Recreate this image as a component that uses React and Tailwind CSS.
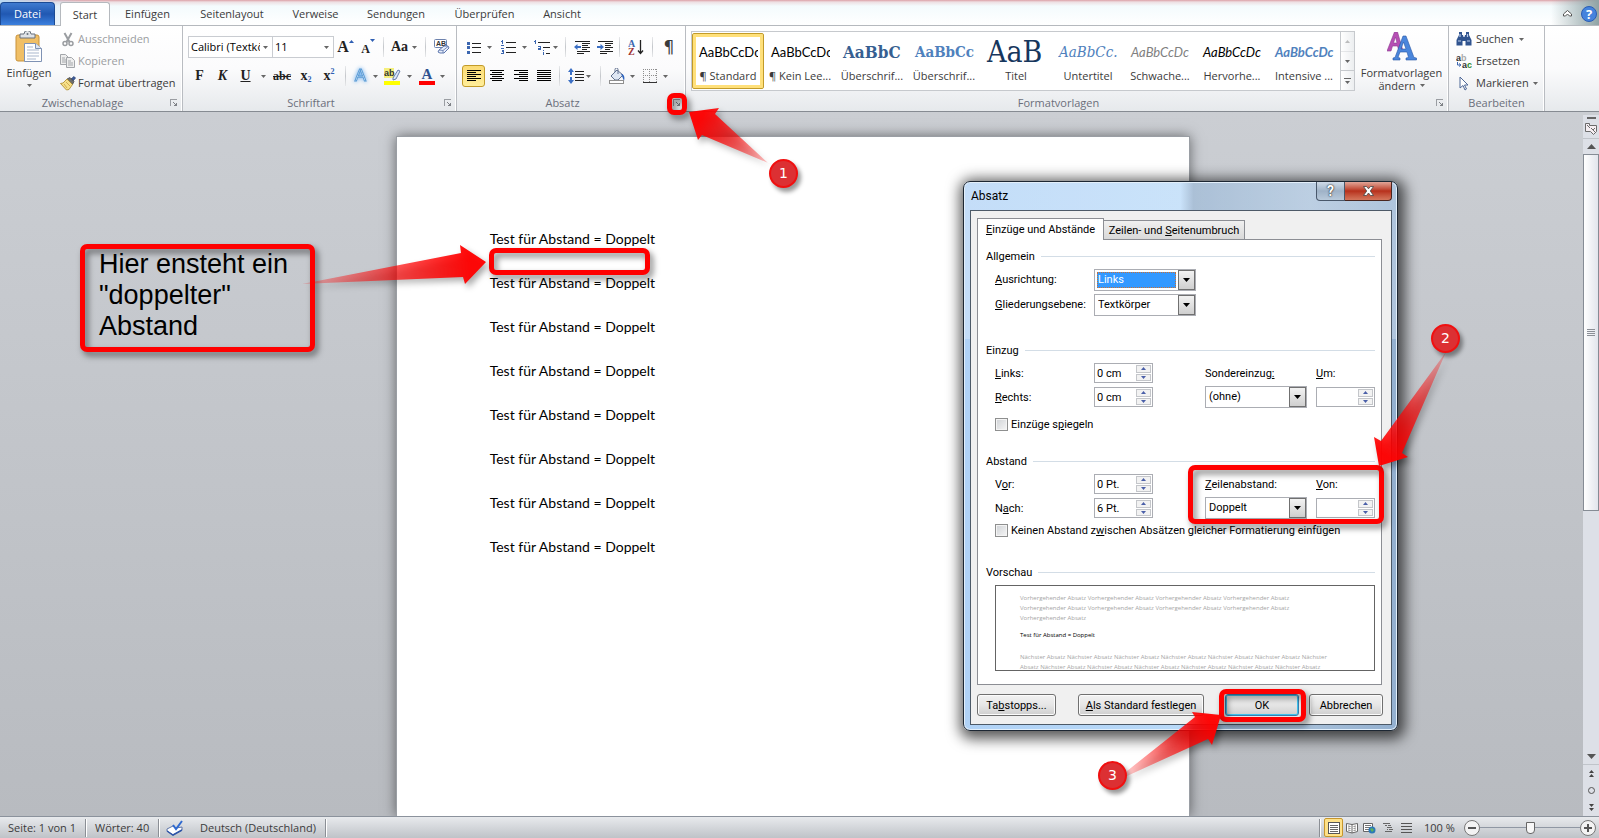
import React from 'react';

// --- Small helpers ---
const Caret = ({ className = "" }) => (
  <svg className={`w-[5px] h-[3px] shrink-0 ${className}`} viewBox="0 0 5 3">
    <path d="M0 0h5L2.500 3z" fill="#666" />
  </svg>
);

const Sep = () => (
  <span className="w-2 h-5 flex justify-center shrink-0">
    <span className="w-px h-full bg-gradient-to-b from-[#e8e9eb] via-[#c4c7cb] to-[#e8e9eb]" />
  </span>
);

const Tool = ({ label, className = "", children }) => (
  <button type="button" aria-label={label} className={`h-[22px] flex items-center justify-center shrink-0 ${className}`}>
    {children}
  </button>
);

const Lines = ({ rows, color = "#000" }) => (
  <svg className="w-[14px] h-[12px]" viewBox="0 0 14 12" shapeRendering="crispEdges">
    {rows.map(([x, w], i) => (
      <rect key={i} x={x} y={i * 2} width={w} height="1" fill={color} />
    ))}
  </svg>
);

// --- Icons ---
const PasteIcon = () => (
  <svg className="w-[28px] h-[32px]" viewBox="0 0 28 32">
    <rect x="1" y="4" width="23" height="26" rx="2" fill="#f0bf66" stroke="#c8923a" />
    <path d="M5 7V3h4a3.500 3.500 0 0 1 7 0h4v4z" fill="#dfe3e8" stroke="#68717c" />
    <circle cx="12.500" cy="3" r="1" fill="#68717c" />
    <path d="M9.500 12.500h11l6 5v13h-17z" fill="#fff" stroke="#7f92b4" />
    <path d="M20.500 12.500v5h6" fill="#dce5f3" stroke="#7f92b4" />
    <path d="M12 16h6M12 19h12M12 22h12M12 25h12M12 28h9" stroke="#a9b7cd" />
  </svg>
);

const ScissorsIcon = () => (
  <svg className="w-[14px] h-[15px]" viewBox="0 0 14 15" fill="none" stroke="#9a9da1">
    <path d="M3.500 1l5 9M10.500 1l-5 9" strokeWidth="2" />
    <circle cx="4" cy="11.500" r="2" strokeWidth="1.500" />
    <circle cx="10" cy="11.500" r="2" strokeWidth="1.500" />
  </svg>
);

const CopyIcon = () => (
  <svg className="w-[16px] h-[14px]" viewBox="0 0 16 14" fill="#eee" stroke="#a3a6aa">
    <path d="M.5.5h5l3 3v7h-8z" />
    <path d="M2 4h3M2 6h4M2 8h4" />
    <path d="M6.500 3.500h5l3 3v7h-8z" />
    <path d="M8 7h3M8 9h5M8 11h5" />
  </svg>
);

const BrushIcon = () => (
  <svg className="w-[16px] h-[15px]" viewBox="0 0 16 15">
    <path d="M11 3l3-2.500 1.500 1.500L13 5z" fill="#3d5c9c" stroke="#24396b" strokeWidth=".7" />
    <path d="M7 3l3-1.500 4 4-1.500 3z" fill="#6d6d6d" stroke="#3c3c3c" strokeWidth=".7" />
    <path d="M7 3l5.500 5.500L9 13.500 6.500 14 0.500 7.500 3 7z" fill="#f6e08a" stroke="#ab8726" strokeWidth=".8" />
    <path d="M4 8l3 4M6 6l4 4" stroke="#c9a240" strokeWidth=".8" />
  </svg>
);

const EraserIcon = () => (
  <svg className="w-[17px] h-[16px]" viewBox="0 0 17 16">
    <rect x="1.500" y=".5" width="12" height="8" rx="1" fill="#fff" stroke="#6d82ad" />
    <text x="3" y="7" fontSize="7" fontWeight="bold" fontFamily="Liberation Sans" fill="#333">AB</text>
    <path d="M6 11l5-4h4l1 2-5 5H7l-2-1z" fill="#e8eefa" stroke="#5d76ad" />
    <path d="M6 11l4 .5 5-4M10 11.500V14" fill="none" stroke="#5d76ad" strokeWidth=".8" />
  </svg>
);

const BulletsIcon = () => (
  <svg className="w-[14px] h-[13px]" viewBox="0 0 14 13" shapeRendering="crispEdges">
    <path d="M0 1h3v3H0zM0 5h3v3H0zM0 10h3v3H0z" fill="#3b66b0" />
    <path d="M5 2h9v1H5zM5 6h9v1H5zM5 11h9v1H5z" fill="#222" />
  </svg>
);

const NumberingIcon = () => (
  <svg className="w-[15px] h-[14px]" viewBox="0 0 15 14" shapeRendering="crispEdges">
    <path d="M1 0h1v4H1zM0 1h1v1H0zM0 5h3v1H2v1H1v1h2v1H0V8h1V7h1V6H0zM0 10h3v4H0v-1h2v-1H1v-1h1z" fill="#3b66b0" />
    <path d="M5 2h10v1H5zM5 7h10v1H5zM5 12h10v1H5z" fill="#222" />
  </svg>
);

const MultiLevelIcon = () => (
  <svg className="w-[18px] h-[15px]" viewBox="0 0 18 15" shapeRendering="crispEdges">
    <path d="M1 0h1v4H1zM0 1h1v1H0zM4 6h3v4H4V8h2V7H4zM9 10h1v1H9zM9 12h1v3H9z" fill="#3b66b0" />
    <path d="M4 2h12v1H4zM9 7h7v1H9zM12 13h4v1h-4z" fill="#222" />
  </svg>
);

const IndentIcon = ({ right }) => (
  <svg className="w-[16px] h-[13px]" viewBox="0 0 16 13">
    <path d="M1 0h15M8 2h8M8 4h6M8 6h8M8 8h5M3 10h13M3 12h7" stroke="#222" transform="translate(0 .5)" shapeRendering="crispEdges" />
    <path d={right ? "M7 6L3.500 3v2H0v2h3.500v2z" : "M0 6l3.500-3v2H7v2H3.500v2z"} fill="#3b6fc4" />
  </svg>
);

const SortIcon = () => (
  <svg className="w-[16px] h-[17px]" viewBox="0 0 16 17">
    <text x="0" y="8" fontSize="10" fontWeight="bold" fontFamily="Liberation Serif" fill="#3b66b0">A</text>
    <text x="0" y="16" fontSize="10" fontWeight="bold" fontFamily="Liberation Serif" fill="#a03434">Z</text>
    <path d="M12.500 1v13M10 11.500l2.500 3 2.500-3" fill="none" stroke="#222" strokeWidth="1.300" />
  </svg>
);

const SpacingIcon = () => (
  <svg className="w-[16px] h-[16px]" viewBox="0 0 16 16">
    <path d="M3 0l3 4H4v3H2V4H0zM3 16l3-4H4V9H2v3H0z" fill="#3b6fc4" />
    <path d="M6.500 3.500H16M6.500 6.500H16M6.500 9.500H16M6.500 12.500H16" stroke="#222" shapeRendering="crispEdges" />
  </svg>
);

const BucketIcon = () => (
  <svg className="w-[18px] h-[16px]" viewBox="0 0 18 16">
    <path d="M3 8l6-6 6 5-5 5H7z" fill="#dfe7f4" stroke="#60708f" />
    <path d="M7 4V1.500a1.500 1.500 0 0 1 3 0V6" fill="none" stroke="#60708f" />
    <path d="M13 6c3 0 4 3 3 7l-2-5z" fill="#2a62bd" />
    <rect x="1.500" y="12.500" width="14" height="3" fill="#fff" stroke="#8f8f8f" />
  </svg>
);

const BordersIcon = () => (
  <svg className="w-[14px] h-[14px]" viewBox="0 0 14 14" shapeRendering="crispEdges">
    <path d="M0 .5h13M.5 0v13M13.500 0v13M6.500 0v13M0 6.500h13" stroke="#8d8d8d" strokeDasharray="1 1" />
    <path d="M0 13.500h14" stroke="#333" />
  </svg>
);

const LauncherIcon = () => (
  <svg className="w-[8px] h-[8px]" viewBox="0 0 8 8" shapeRendering="crispEdges">
    <path d="M0 .5h7M.5 0v7" stroke="#9a9da2" />
    <path d="M7 3v4H3zM3 3h1v1h1v1H4z" fill="#7f8287" />
  </svg>
);

const StylesIcon = () => (
  <svg className="w-[30px] h-[29px]" viewBox="0 0 30 29">
    <path d="M0 19L7.500 0h3L16 19h-4l-1.500-5h-5L4 19zM6.500 11h3.500L8.500 5z" fill="#b64fb4" stroke="#8c3b90" strokeWidth=".6" />
    <path fillRule="evenodd" d="M6 28v-2l2-.5L16 4h3l8 21.500 2.500.5v2H19v-2l2.500-.5L20 20h-7l-2 5.500 2 .5v2zM14 17h5l-2.500-7z" fill="#4a86dc" stroke="#2a58a6" strokeWidth=".6" />
  </svg>
);

const BinocularsIcon = () => (
  <svg className="w-[16px] h-[14px]" viewBox="0 0 16 14">
    <path d="M3 0h3v3h1l.5 2h1L9 3h1V0h3v3l2.500 5v5.500h-6V9h-3v4.500h-6V8L3 3z" fill="#31548f" />
    <path d="M2 9h3M11 9h3M4 2v3M11.500 2v3" stroke="#b9cbea" strokeWidth="1.200" />
  </svg>
);

const ReplaceIcon = () => (
  <svg className="w-[16px] h-[15px]" viewBox="0 0 16 15">
    <text x="0" y="7" fontSize="9" fontWeight="bold" fontFamily="Liberation Sans" fill="#333">a<tspan fill="#aaa">b</tspan></text>
    <text x="6" y="14" fontSize="9" fontWeight="bold" fontFamily="Liberation Sans" fill="#333">a<tspan fill="#2c8a2c">c</tspan></text>
    <path d="M1.500 8v3H4M3 9.500L5 11l-2 1.500" fill="none" stroke="#3b66b0" />
  </svg>
);

const PointerIcon = () => (
  <svg className="w-[10px] h-[15px]" viewBox="0 0 10 15">
    <path d="M1 1l8 8H5.500l2 4-1.500 1-2-4.500L1 12z" fill="#fff" stroke="#4e6897" />
  </svg>
);

const ProofIcon = () => (
  <svg className="w-[18px] h-[16px]" viewBox="0 0 18 16">
    <path d="M1 9l6-3 3 2 6-1v3l-9 5-6-4z" fill="#fff" stroke="#5b73a8" />
    <path d="M1 11l6 4 9-5" fill="none" stroke="#2f55a8" strokeWidth="1.500" />
    <path d="M7 5l3 4 6-8" fill="none" stroke="#2f6ad0" strokeWidth="2" />
  </svg>
);

// --- Ribbon ---
const TABS = [
  { name: "Einfügen", width: "w-[75px]" },
  { name: "Seitenlayout", width: "w-[94px]" },
  { name: "Verweise", width: "w-[73px]" },
  { name: "Sendungen", width: "w-[88px]" },
  { name: "Überprüfen", width: "w-[89px]" },
  { name: "Ansicht", width: "w-[66px]" },
];

const RibbonTabs = () => (
  <nav className="h-[26px] flex items-end border-b border-[#b5b9be] bg-[linear-gradient(to_right,#b9d9f3,transparent_5%,transparent_97%,#8fa3a5),linear-gradient(#dca0a6,#eedfe2_2px,#f4fbfd_6px,#fff)]">
    <button type="button" className="w-[55px] h-[23px] rounded-t-sm border border-[#1b4a94] border-b-0 bg-gradient-to-b from-[#3f7bd0] via-[#2058b2] to-[#3c80de] text-white">
      Datei
    </button>
    <button type="button" className="w-[50px] h-[24px] ml-[5px] -mb-px rounded-t-[3px] border border-b-0 border-[#b5b9be] bg-white">
      Start
    </button>
    {TABS.map((tab) => (
      <button key={tab.name} type="button" className={`h-[23px] ${tab.width}`}>{tab.name}</button>
    ))}
    <div className="ml-auto h-[23px] flex items-center gap-[9px] pr-[2px]">
      <button type="button" aria-label="Menüband minimieren">
        <svg className="w-[9px] h-[7px]" viewBox="0 0 9 7">
          <path d="M.5 4l4-3.500 4 3.500v2H6.500l-2-2-2 2H.5z" fill="#fff" stroke="#555" />
        </svg>
      </button>
      <button type="button" aria-label="Hilfe" className="size-4 rounded-full border border-[#2a5db4] bg-[#4583dd] text-white text-[13px] leading-[14px] font-bold">?</button>
    </div>
  </nav>
);

const RibbonGroup = ({ title, launcher = true, width, children }) => (
  <section aria-label={title} className={`flex flex-col shrink-0 border-r border-[#b9bcc1] shadow-[inset_-1px_0_0_#fff] ${width}`}>
    <div className="flex-1">{children}</div>
    <div className="h-4 flex items-center text-[#6b6f7b]">
      <span className="flex-1 text-center">{title}</span>
      {launcher && (
        <button type="button" aria-label={`${title} öffnen`} className="w-[17px] flex justify-center">
          <LauncherIcon />
        </button>
      )}
    </div>
  </section>
);

const ClipboardGroup = () => (
  <RibbonGroup title="Zwischenablage" width="w-[183px]">
    <div className="flex">
      <button type="button" className="w-[58px] pt-[5px] flex flex-col items-center">
        <PasteIcon />
        <span className="leading-[20px]">Einfügen</span>
        <Caret className="mt-px" />
      </button>
      <div className="pt-[2px] flex flex-col">
        <button type="button" className="h-[22px] flex items-center text-[#9b9da1]">
          <span className="w-5 flex justify-center">
            <ScissorsIcon />
          </span>Ausschneiden
        </button>
        <button type="button" className="h-[22px] flex items-center text-[#9b9da1]">
          <span className="w-5 flex justify-center">
            <CopyIcon />
          </span>Kopieren
        </button>
        <button type="button" className="h-[22px] flex items-center">
          <span className="w-5 flex justify-center">
            <BrushIcon />
          </span>Format übertragen
        </button>
      </div>
    </div>
  </RibbonGroup>
);

const FontGroup = () => (
  <RibbonGroup title="Schriftart" width="w-[274px]">
    <div className="pl-[5px] pt-[10px] font-['Liberation_Serif',serif] text-[14px] font-bold text-[#222]">
      <div className="h-[22px] flex items-center">
        <div className="w-[85px] h-[22px] flex items-center border border-[#c9ccd1] bg-white pl-[2px] pr-1">
          <input aria-label="Schriftart" defaultValue="Calibri (Textkörper)" className="min-w-0 flex-1 mr-[3px] font-['Open_Sans',sans-serif] text-[11px] font-normal text-black outline-none" />
          <Caret />
        </div>
        <div className="w-[62px] h-[22px] flex items-center border border-[#c9ccd1] bg-white pl-[2px] pr-1 -ml-px">
          <input aria-label="Schriftgrad" defaultValue="11" className="min-w-0 flex-1 font-['Open_Sans',sans-serif] text-[11px] font-normal text-black outline-none" />
          <Caret />
        </div>
        <Tool label="Schrift vergrößern" className="w-[23px] text-[16px]">A<svg className="w-[5px] h-[3px] mb-3" viewBox="0 0 5 3"><path d="M0 3h5L2.500 0z" fill="#2f5fb3" /></svg></Tool>
        <Tool label="Schrift verkleinern" className="w-[22px] text-xs pt-[3px]">A<svg className="w-[5px] h-[3px] mb-4" viewBox="0 0 5 3"><path d="M0 0h5L2.500 3z" fill="#2f5fb3" /></svg></Tool>
        <Sep />
        <Tool label="Groß-/Kleinschreibung" className="w-[34px] gap-1">Aa<Caret /></Tool>
        <Sep />
        <Tool label="Formatierung löschen" className="w-6"><EraserIcon /></Tool>
      </div>
      <div className="h-[22px] mt-[7px] flex items-center">
        <Tool label="Fett" className="w-[23px]">F</Tool>
        <Tool label="Kursiv" className="w-[23px] italic">K</Tool>
        <Tool label="Unterstrichen" className="w-[23px] underline">U</Tool>
        <Tool label="Unterstreichungsart" className="w-3"><Caret /></Tool>
        <Tool label="Durchgestrichen" className="w-[26px] text-xs line-through">abc</Tool>
        <Tool label="Tiefgestellt" className="w-[22px]">x<span className="text-[8px] text-[#2f5fb3] mt-2">2</span></Tool>
        <Tool label="Hochgestellt" className="w-6">x<span className="text-[8px] text-[#2f5fb3] mb-2">2</span></Tool>
        <Sep />
        <Tool label="Texteffekte" className="w-8 gap-1">
          <span className="w-4 font-['Liberation_Sans',sans-serif] text-[17px] leading-5 font-normal text-white [-webkit-text-stroke:1px_#5a9bd5] drop-shadow-[0_0_2px_#5aa5ee]">A</span>
          <Caret />
        </Tool>
        <Tool label="Texthervorhebungsfarbe" className="w-[34px] gap-[6px]">
          <svg className="w-[17px] h-[17px]" viewBox="0 0 17 17">
            <rect width="10" height="10" fill="#f5ef7c" />
            <text x="0" y="8" fontSize="9" fontWeight="bold" fontFamily="Liberation Sans" fill="#333">ab</text>
            <path d="M9 10l5-8 2 1-4 8-3 1z" fill="#dbe7fa" stroke="#48639b" strokeWidth=".8" />
            <rect y="13" width="16" height="4" fill="#ff0" />
          </svg>
          <Caret />
        </Tool>
        <Tool label="Schriftfarbe" className="w-[34px] gap-[5px]">
          <span className="w-4 h-[17px] flex items-end justify-center border-b-4 border-[#f00] text-[#2f5290] text-[15px] leading-[13px]">A</span>
          <Caret />
        </Tool>
      </div>
    </div>
  </RibbonGroup>
);

const ParagraphGroup = () => (
  <RibbonGroup title="Absatz" width="w-[229px]">
    <div className="pl-[5px] pt-[10px]">
      <div className="h-[22px] flex items-center">
        <Tool label="Aufzählungszeichen" className="w-[34px] gap-[6px]"><BulletsIcon /><Caret /></Tool>
        <Tool label="Nummerierung" className="w-[35px] gap-[6px]"><NumberingIcon /><Caret /></Tool>
        <Tool label="Liste mit mehreren Ebenen" className="w-[30px] gap-px"><MultiLevelIcon /><Caret /></Tool>
        <Sep />
        <Tool label="Einzug verkleinern" className="w-[25px]"><IndentIcon /></Tool>
        <Tool label="Einzug vergrößern" className="w-[21px]"><IndentIcon right /></Tool>
        <Sep />
        <Tool label="Sortieren" className="w-[25px]"><SortIcon /></Tool>
        <Sep />
        <Tool label="Alle anzeigen" className="w-[26px] text-[17px] font-['DejaVu_Sans',sans-serif]">¶</Tool>
      </div>
      <div className="h-[22px] mt-[7px] flex items-center">
        <Tool label="Linksbündig" className="w-[23px] rounded-[3px] border border-[#c29b29] bg-gradient-to-b from-[#fbdb74] to-[#ffee9a]">
          <Lines rows={[[0, 14], [0, 9], [0, 14], [0, 9], [0, 14], [0, 9]]} />
        </Tool>
        <Tool label="Zentriert" className="w-6"><Lines rows={[[0, 14], [2, 10], [0, 14], [2, 10], [0, 14], [2, 10]]} /></Tool>
        <Tool label="Rechtsbündig" className="w-6"><Lines rows={[[0, 14], [5, 9], [0, 14], [5, 9], [0, 14], [5, 9]]} /></Tool>
        <Tool label="Blocksatz" className="w-[22px]"><Lines rows={[[0, 14], [0, 14], [0, 14], [0, 14], [0, 14], [0, 14]]} /></Tool>
        <Sep />
        <Tool label="Zeilenabstand" className="w-[33px] gap-[2px]"><SpacingIcon /><Caret /></Tool>
        <Sep />
        <Tool label="Schattierung" className="w-[34px] gap-1"><BucketIcon /><Caret /></Tool>
        <Tool label="Rahmen" className="w-[34px] gap-[6px]"><BordersIcon /><Caret /></Tool>
      </div>
    </div>
  </RibbonGroup>
);

const STYLES = [
  { name: "¶ Standard", sample: "AaBbCcDc", look: "font-['Lato',sans-serif] text-[13px] text-black", active: true },
  { name: "¶ Kein Lee...", sample: "AaBbCcDc", look: "font-['Lato',sans-serif] text-[13px] text-black" },
  { name: "Überschrif...", sample: "AaBbC", look: "font-['DejaVu_Serif_Condensed','DejaVu_Serif',serif] font-bold text-[17px] text-[#365f91]" },
  { name: "Überschrif...", sample: "AaBbCc", look: "font-['DejaVu_Serif_Condensed','DejaVu_Serif',serif] font-bold text-[15px] text-[#4f81bd]" },
  { name: "Titel", sample: "AaB", look: "font-['DejaVu_Serif_Condensed','DejaVu_Serif',serif] text-[30px] text-[#17365d]" },
  { name: "Untertitel", sample: "AaBbCc.", look: "font-['DejaVu_Serif_Condensed','DejaVu_Serif',serif] italic text-[15px] text-[#4f81bd]" },
  { name: "Schwache...", sample: "AaBbCcDc", look: "font-['Lato',sans-serif] italic text-[13px] text-[#808080]" },
  { name: "Hervorhe...", sample: "AaBbCcDc", look: "font-['Lato',sans-serif] italic text-[13px] text-black" },
  { name: "Intensive ...", sample: "AaBbCcDc", look: "font-['Lato',sans-serif] italic font-bold text-[13px] text-[#4f81bd]" },
];

const StylesGroup = () => (
  <RibbonGroup title="Formatvorlagen" width="w-[763px]">
    <div className="flex pl-[5px] pt-[5px]">
      <div className="flex h-[60px] border border-[#c6c9cd] bg-white">
        {STYLES.map((style, i) => (
          <button
            key={i}
            type="button"
            className={`w-[72px] h-[56px] mt-px flex flex-col items-center rounded-[2px] border ${style.active ? "border-[#c29b29] shadow-[inset_0_0_0_3px_#ffe07a]" : "border-transparent"}`}
          >
            <span className={`w-[60px] h-[24px] mt-[6px] pl-px flex items-center overflow-hidden whitespace-nowrap ${style.look}`}>{style.sample}</span>
            <span className="mt-1 leading-4 whitespace-nowrap">{style.name}</span>
          </button>
        ))}
        <div className="w-[14px] flex flex-col border-l border-[#c6c9cd] divide-y divide-[#c6c9cd] bg-gradient-to-r from-white to-[#eceef0]">
          <button type="button" aria-label="Nach oben" className="flex-1 flex items-center justify-center opacity-40"><Caret className="rotate-180" /></button>
          <button type="button" aria-label="Nach unten" className="flex-1 flex items-center justify-center"><Caret /></button>
          <button type="button" aria-label="Weitere" className="flex-1 flex flex-col items-center justify-center gap-[2px]"><span className="w-[7px] h-px bg-[#666]" /><Caret /></button>
        </div>
      </div>
      <button type="button" className="flex-1 flex flex-col items-center pt-px leading-[13px]">
        <StylesIcon />
        <span className="mt-[5px]">Formatvorlagen</span>
        <span className="flex items-center gap-1">ändern <Caret /></span>
      </button>
    </div>
  </RibbonGroup>
);

const EditGroup = () => (
  <RibbonGroup title="Bearbeiten" launcher={false} width="w-[96px]">
    <div className="pt-[2px] pl-[6px]">
      <button type="button" className="h-[22px] flex items-center">
        <span className="w-[18px] mr-[3px] flex justify-center"><BinocularsIcon /></span>Suchen<Caret className="ml-[5px]" />
      </button>
      <button type="button" className="h-[22px] flex items-center">
        <span className="w-[18px] mr-[3px] flex justify-center"><ReplaceIcon /></span>Ersetzen
      </button>
      <button type="button" className="h-[22px] flex items-center">
        <span className="w-[18px] mr-[3px] flex justify-center"><PointerIcon /></span>Markieren<Caret className="ml-1" />
      </button>
    </div>
  </RibbonGroup>
);

// --- Paragraph dialog ---
const Legend = ({ children, className = "" }) => (
  <h3 className={`h-4 flex items-center gap-[6px] ${className}`}>
    {children}
    <span className="flex-1 h-px bg-[#d3dde6]" />
  </h3>
);

const ComboBox = ({ id, value, focused }) => (
  <div className="w-[102px] h-[22px] flex border border-[#abadb3] bg-white">
    <div className="flex-1 p-[2px]">
      <select id={id} className={`w-full h-full appearance-none pl-px leading-3 ${focused ? "bg-[#3399ff] text-white outline-1 -outline-offset-1 outline-dotted outline-[#c87137]" : "outline-none"}`}>
        <option>{value}</option>
      </select>
    </div>
    <span className="w-[17px] flex items-center justify-center border border-[#707070] bg-gradient-to-b from-[#f2f2f2] to-[#cfcfcf]">
      <svg className="w-[7px] h-[4px]" viewBox="0 0 7 4"><path d="M0 0h7L3.500 4z" /></svg>
    </span>
  </div>
);

const Spinner = ({ id, value }) => (
  <div className="w-[59px] h-5 flex border border-[#abadb3] bg-white p-px">
    <input id={id} defaultValue={value} className="min-w-0 flex-1 pl-px outline-none" />
    <span className="w-[15px] flex flex-col gap-px">
      <button type="button" aria-label="Erhöhen" className="flex-1 flex items-center justify-center border border-[#c4c6ca] bg-[#f2f2f2]">
        <svg className="w-[5px] h-[3px]" viewBox="0 0 5 3"><path d="M0 3h5L2.500 0z" fill="#4a5fa8" /></svg>
      </button>
      <button type="button" aria-label="Verringern" className="flex-1 flex items-center justify-center border border-[#c4c6ca] bg-[#f2f2f2]">
        <svg className="w-[5px] h-[3px]" viewBox="0 0 5 3"><path d="M0 0h5L2.500 3z" fill="#4a5fa8" /></svg>
      </button>
    </span>
  </div>
);

const CheckBox = ({ children, className = "" }) => (
  <label className={`h-5 flex items-center gap-[3px] whitespace-nowrap ${className}`}>
    <input type="checkbox" className="size-[13px] shrink-0 appearance-none border border-[#8e8f8f] bg-gradient-to-br from-[#cfd2d6] to-[#f6f6f6] shadow-[inset_0_0_0_1px_#f4f4f4]" />
    <span>{children}</span>
  </label>
);

const DialogButton = ({ children, primary, className = "" }) => (
  <button
    type="button"
    className={`h-[22px] rounded-[3px] border bg-gradient-to-b from-[#f2f2f2] via-[#e6e6e6] to-[#cfcfcf] whitespace-nowrap ${
      primary ? "border-[#3c7fb1] shadow-[inset_0_0_0_1px_#3fc4ee]" : "border-[#707070] shadow-[inset_0_0_0_1px_#fcfcfc]"
    } ${className}`}
  >
    {children}
  </button>
);

const Preview = () => (
  <div className="ml-[9px] mt-[5px] h-[86px] overflow-hidden border border-[#646464] bg-white pl-6 pt-[7px] font-['Open_Sans',sans-serif] text-[6px] leading-[10px] text-[#a5a5a5] whitespace-nowrap">
    <p>{"Vorhergehender Absatz ".repeat(4)}</p>
    <p>{"Vorhergehender Absatz ".repeat(4)}</p>
    <p>Vorhergehender Absatz</p>
    <p className="mt-[7px] text-black">Test für Abstand = Doppelt</p>
    <p className="mt-3">{"Nächster Absatz ".repeat(6)}Nächster</p>
    <p>Absatz {"Nächster Absatz ".repeat(6)}</p>
  </div>
);

const ParagraphDialog = () => (
  <div role="dialog" aria-label="Absatz" className="absolute left-[963px] top-[181px] w-[435px] rounded-[7px] border border-[#1d2733] bg-[linear-gradient(#ffffff40,#ffffff40_157px,transparent_157px),linear-gradient(to_right,#b0d2f6,#b8d9f8_50%,#8fabc9_53%,#a6bfd9_80%,#93b0d0)] pl-[6px] pr-[5px] pb-[5px] shadow-[inset_0_0_0_1px_#e3effa,2px_3px_14px_5px_rgba(0,0,0,0.65)] font-['Roboto',sans-serif] text-[11px] leading-[13px] text-black">
    <div className="h-7 flex justify-between pl-px">
      <h2 className="pt-[6px] text-xs">Absatz</h2>
      <div className="flex h-[19px]">
        <button type="button" aria-label="Hilfe" className="w-[29px] rounded-bl-[4px] border border-t-0 border-[#49586b] bg-gradient-to-b from-[#cfdbe8] via-[#9fb2c7] to-[#b9cadb] text-[14px] leading-4 font-bold text-white [text-shadow:0_0_2px_#222,0_0_1px_#222]">?</button>
        <button type="button" aria-label="Schließen" className="w-[47px] flex items-center justify-center rounded-br-[4px] border border-t-0 border-l-0 border-[#49251f] bg-gradient-to-b from-[#e0a598] via-[#b7301c] via-50% to-[#d4765c]">
          <svg className="w-[11px] h-[10px]" viewBox="0 0 11 10">
            <path d="M.5.5h3l2 2.300 2-2.300h3L7.300 5l3.200 4.500h-3l-2-2.500-2 2.500h-3L3.700 5z" fill="#fff" stroke="#444" strokeWidth=".8" />
          </svg>
        </button>
      </div>
    </div>
    <div className="border border-[#4d5a68] bg-[#f0f0f0] pl-[6px] pr-[8px] pt-[7px] pb-[8px]">
      <div role="tablist" className="flex items-end">
        <button type="button" role="tab" aria-selected="true" className="w-[127px] h-[22px] -mb-px border border-b-0 border-[#8c8e94] bg-white whitespace-nowrap"><u>E</u>inzüge und Abstände</button>
        <button type="button" role="tab" aria-selected="false" className="w-[141px] h-[19px] border border-b-0 border-l-0 border-[#8c8e94] bg-gradient-to-b from-[#f0f0f0] to-[#d9d9d9] whitespace-nowrap">Zeilen- und <u>S</u>eitenumbruch</button>
      </div>
      <div className="mr-px border border-[#8c8e94] bg-white pl-[8px] pr-[6px] pt-[8px] pb-[13px]">
        <Legend>Allgemein</Legend>
        <div className="mt-[3px] ml-[9px] grid grid-cols-[99px_1fr] auto-rows-[25px] items-center">
          <label htmlFor="align"><u>A</u>usrichtung:</label>
          <ComboBox id="align" value="Links" focused />
          <label htmlFor="level"><u>G</u>liederungsebene:</label>
          <ComboBox id="level" value="Textkörper" />
        </div>

        <Legend className="mt-[25px]">Einzug</Legend>
        <div className="mt-[3px] ml-[9px] grid grid-cols-[99px_111px_111px_1fr] auto-rows-[24px] items-center">
          <label htmlFor="left"><u>L</u>inks:</label>
          <Spinner id="left" value="0 cm" />
          <label htmlFor="special">Sondereinzug<u>:</u></label>
          <label htmlFor="by"><u>U</u>m:</label>
          <label htmlFor="right"><u>R</u>echts:</label>
          <Spinner id="right" value="0 cm" />
          <ComboBox id="special" value="(ohne)" />
          <Spinner id="by" value="" />
        </div>
        <CheckBox className="mt-[5px] ml-[9px]">Einzüge s<u>p</u>iegeln</CheckBox>

        <Legend className="mt-[19px]">Abstand</Legend>
        <div className="mt-[3px] ml-[9px] grid grid-cols-[99px_111px_111px_1fr] auto-rows-[24px] items-center">
          <label htmlFor="before">V<u>o</u>r:</label>
          <Spinner id="before" value="0 Pt." />
          <label htmlFor="spacing"><u>Z</u>eilenabstand:</label>
          <label htmlFor="at"><u>V</u>on:</label>
          <label htmlFor="after">N<u>a</u>ch:</label>
          <Spinner id="after" value="6 Pt." />
          <ComboBox id="spacing" value="Doppelt" />
          <Spinner id="at" value="" />
        </div>
        <CheckBox className="ml-[9px]">Keinen Abstand z<u>w</u>ischen Absätzen gleicher Formatierung einfügen</CheckBox>

        <Legend className="mt-6">Vorschau</Legend>
        <Preview />
      </div>
      <div className="mt-[9px] flex">
        <DialogButton className="w-[79px]">Ta<u>b</u>stopps...</DialogButton>
        <DialogButton className="w-[126px] ml-[22px]"><u>A</u>ls Standard festlegen</DialogButton>
        <DialogButton primary className="w-[74px] ml-auto">OK</DialogButton>
        <DialogButton className="w-[74px] ml-[10px]">Abbrechen</DialogButton>
      </div>
    </div>
  </div>
);

// --- Annotations ---
const ARROWS = [
  { id: "a0", tail: [302, 284], tip: [470, 264], points: "302,284 461,253 460,245 486,262 465,284 463,277" },
  { id: "a1", tail: [771, 164], tip: [700, 119], points: "773,165 702,135 698,140 689,112 719,108 715,114 768,163" },
  { id: "a2", tail: [1446, 352], tip: [1386, 455], points: "1446,352 1381,441 1374,437 1379,466 1408,457 1402,453" },
  { id: "a3", tail: [1127, 774], tip: [1210, 722], points: "1127,776 1208,739 1212,745 1221,715 1192,712 1195,717 1127,771" },
];

const Arrows = () => (
  <svg className="absolute inset-0 w-full h-full drop-shadow-[3px_4px_3px_rgba(0,0,0,0.35)]">
    {ARROWS.map(({ id, tail, tip, points }) => (
      <g key={id}>
        <linearGradient id={id} gradientUnits="userSpaceOnUse" x1={tail[0]} y1={tail[1]} x2={tip[0]} y2={tip[1]}>
          <stop offset="0" stopColor="#f00" stopOpacity=".2" />
          <stop offset=".5" stopColor="#f00" stopOpacity=".62" />
          <stop offset="1" stopColor="#f00" stopOpacity=".96" />
        </linearGradient>
        <polygon points={points} fill={`url(#${id})`} />
      </g>
    ))}
  </svg>
);

const Frame = ({ className }) => (
  <div className={`absolute border-[5px] border-[#f00] rounded-[7px] drop-shadow-[3px_4px_3px_rgba(0,0,0,0.5)] ${className}`} />
);

const Marker = ({ className, children }) => (
  <span className={`absolute size-[29px] rounded-full border-2 border-[#f01010] bg-[#dc3033] text-white text-center text-sm leading-[25px] font-['DejaVu_Sans',sans-serif] shadow-[3px_4px_4px_rgba(0,0,0,0.4)] ${className}`}>
    {children}
  </span>
);

const Annotations = () => (
  <div className="absolute inset-0 pointer-events-none">
    <Frame className="left-[80px] top-[244px] w-[235px] h-[108px]" />
    <p className="absolute left-[99px] top-[249px] font-['Liberation_Sans',Arial,sans-serif] text-[27px] leading-[31px] text-black whitespace-nowrap">
      Hier ensteht ein<br />"doppelter"<br />Abstand
    </p>
    <Frame className="left-[489px] top-[248px] w-[161px] h-[27px]" />
    <Frame className="left-[667px] top-[93px] w-[20px] h-[22px]" />
    <Frame className="left-[1188px] top-[465px] w-[196px] h-[59px]" />
    <Frame className="left-[1219px] top-[689px] w-[87px] h-[33px]" />
    <Arrows />
    <Marker className="left-[769px] top-[159px]">1</Marker>
    <Marker className="left-[1431px] top-[324px]">2</Marker>
    <Marker className="left-[1098px] top-[761px]">3</Marker>
  </div>
);

// --- Workspace ---
const ScrollBar = () => (
  <div className="w-4 mt-[3px] shrink-0 flex flex-col items-center bg-[#dde0e7]">
    <span className="w-[9px] h-[2px] mt-[2px] bg-[#666]" />
    <button type="button" aria-label="Lineal" className="h-[18px] mt-px">
      <svg className="w-[12px] h-[12px]" viewBox="0 0 12 12" fill="#f5eef2" stroke="#6b6b6b">
        <path d="M.5.5h4v2h7v6l-3 3-3-3h-5z" /><path d="M2 2l3 3M6 5l4 4M10 5L8 7" />
      </svg>
    </button>
    <button type="button" aria-label="Nach oben" className="w-full h-4 flex items-center justify-center border-t border-[#c0c4ca]">
      <svg className="w-[9px] h-[5px]" viewBox="0 0 9 5"><path d="M0 5h9L4.500 0z" fill="#555" /></svg>
    </button>
    <div className="flex-1 w-full flex flex-col">
      <div className="w-full h-[60%] flex flex-col items-center justify-center gap-px border border-[#868c95] bg-gradient-to-r from-white to-[#e2e5ec]">
        {[0, 1, 2, 3].map((i) => <span key={i} className="w-2 h-px bg-[#8b8f96]" />)}
      </div>
    </div>
    <button type="button" aria-label="Nach unten" className="w-full h-4 flex items-center justify-center border-b border-[#c0c4ca]">
      <svg className="w-[9px] h-[5px]" viewBox="0 0 9 5"><path d="M0 0h9L4.500 5z" fill="#555" /></svg>
    </button>
    <button type="button" aria-label="Vorherige Seite" className="h-[17px]"><svg className="w-[5px] h-[7px]" viewBox="0 0 5 7"><path d="M0 3h5L2.500 0zM0 7h5L2.500 4z" fill="#444" /></svg></button>
    <button type="button" aria-label="Browseobjekt" className="h-[17px]"><span className="block size-[7px] rounded-full border border-[#555]" /></button>
    <button type="button" aria-label="Nächste Seite" className="h-[17px]"><svg className="w-[5px] h-[7px]" viewBox="0 0 5 7"><path d="M0 0h5L2.500 3zM0 4h5L2.500 7z" fill="#444" /></svg></button>
  </div>
);

const Workspace = () => (
  <main className="flex-1 min-h-0 flex bg-gradient-to-b from-[#cbced3] to-[#b8bbc0]">
    <div className="flex-1 pt-6 pl-[3px] flex justify-center overflow-hidden">
      <article className="w-[50.3%] bg-white border border-b-0 border-[#9a9ea4] pl-[93px] pt-[80px] shadow-[0_0_12px_rgba(0,0,0,0.5)] font-['Lato',sans-serif] text-[14px] leading-[44px] text-black">
        {Array.from({ length: 8 }, (_, i) => <p key={i}>Test für Abstand = Doppelt</p>)}
      </article>
    </div>
    <ScrollBar />
  </main>
);

const StatusSep = () => <span className="w-[2px] h-[18px] border-l border-[#8b8f95] bg-white" />;

const StatusBar = () => (
  <footer className="h-[22px] shrink-0 flex items-center border-t border-[#8b929c] bg-gradient-to-b from-[#e8eaed] to-[#bfc3c8]">
    <button type="button" className="w-[85px] pl-2 text-left">Seite: 1 von 1</button>
    <StatusSep />
    <button type="button" className="w-[71px] pl-2 text-left">Wörter: 40</button>
    <StatusSep />
    <button type="button" aria-label="Rechtschreibung" className="ml-[6px]"><ProofIcon /></button>
    <button type="button" className="w-[141px] pl-4 text-left">Deutsch (Deutschland)</button>
    <StatusSep />
    <div className="ml-auto flex items-center">
      <StatusSep />
      <button type="button" aria-label="Seitenlayout" className="w-[19px] h-[19px] ml-[3px] flex items-center justify-center rounded-[2px] border border-[#c7962c] bg-[#fee188]">
        <svg className="w-[12px] h-[12px]" viewBox="0 0 12 12" shapeRendering="crispEdges"><path d="M.5.5h11v11H.5z" fill="#fff" stroke="#555" /><path d="M2 3.500h8M2 5.500h8M2 7.500h8M2 9.500h8" stroke="#666" /></svg>
      </button>
      <button type="button" aria-label="Vollbild-Lesemodus" className="ml-[3px]">
        <svg className="w-[12px] h-[12px]" viewBox="0 0 12 12" fill="#fff" stroke="#666"><path d="M.5 1.500L6 2.500l5.500-1v8L6 11 .5 9.500zM6 2.500V11" /><path d="M2 4l2.500.5M2 6l2.500.5M2 8l2.500.5M7.500 4.500L10 4M7.500 6.500L10 6M7.500 8.500L10 8" strokeWidth=".8" /></svg>
      </button>
      <button type="button" aria-label="Weblayout" className="ml-[5px]">
        <svg className="w-[13px] h-[12px]" viewBox="0 0 13 12"><path d="M.5 1.500h9v8h-9z" fill="#fff" stroke="#666" /><path d="M2 3.500h6M2 5.500h6M2 7.500h4" stroke="#777" /><circle cx="9" cy="8" r="3.500" fill="#2d79b8" /><path d="M7 7l2-1 2 2-2 2z" fill="#5fb15a" /></svg>
      </button>
      <button type="button" aria-label="Gliederung" className="ml-[7px]">
        <svg className="w-[10px] h-[10px]" viewBox="0 0 10 10" shapeRendering="crispEdges"><path d="M0 .5h7M2 2.500h2M5 2.500h3M4 4.500h5M4 6.500h1M6 6.500h4M2 8.500h7" stroke="#666" /></svg>
      </button>
      <button type="button" aria-label="Entwurf" className="ml-[8px]">
        <svg className="w-[11px] h-[10px]" viewBox="0 0 11 10" shapeRendering="crispEdges"><path d="M0 .5h11M0 3.500h11M0 6.500h11M0 9.500h11" stroke="#555" /></svg>
      </button>
      <button type="button" className="ml-3 w-[40px] text-left">100 %</button>
      <button type="button" aria-label="Verkleinern" className="size-4 flex items-center justify-center rounded-full border border-[#777] bg-[#f3f3f3]"><span className="w-2 h-[2px] bg-[#555]" /></button>
      <input
        type="range"
        aria-label="Zoom"
        defaultValue="50"
        className="w-[100px] h-4 appearance-none bg-[linear-gradient(#8f97a3,#8f97a3)] bg-[length:100%_1px] bg-center bg-no-repeat [&::-webkit-slider-thumb]:appearance-none [&::-webkit-slider-thumb]:w-[9px] [&::-webkit-slider-thumb]:h-[12px] [&::-webkit-slider-thumb]:rounded-b-[4px] [&::-webkit-slider-thumb]:border [&::-webkit-slider-thumb]:border-[#666] [&::-webkit-slider-thumb]:bg-[#f7f7f7]"
      />
      <button type="button" aria-label="Vergrößern" className="size-4 mr-[3px] flex items-center justify-center rounded-full border border-[#777] bg-[#f3f3f3]">
        <svg className="w-2 h-2" viewBox="0 0 8 8"><path d="M4 0v8M0 4h8" stroke="#555" strokeWidth="2" /></svg>
      </button>
    </div>
  </footer>
);

const App = () => (
  <div className="relative h-screen flex flex-col overflow-hidden font-['Open_Sans',sans-serif] text-[11px] leading-4 text-[#3b3b3b]">
    <header className="shrink-0">
      <RibbonTabs />
      <div className="h-[86px] flex border-b border-[#868b92] bg-gradient-to-b from-white via-[#fbfbfc] to-[#e6e9ec]">
        <ClipboardGroup />
        <FontGroup />
        <ParagraphGroup />
        <StylesGroup />
        <EditGroup />
      </div>
    </header>
    <Workspace />
    <StatusBar />
    <ParagraphDialog />
    <Annotations />
  </div>
);

export default App;
